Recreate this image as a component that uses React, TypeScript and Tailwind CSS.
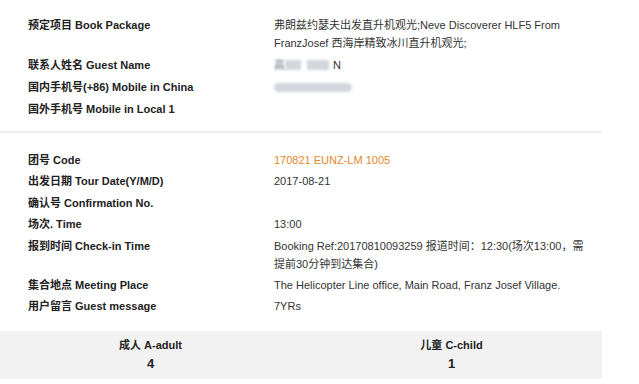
import React from 'react';

type Row = { label: string; value?: React.ReactNode };

const font = { fontFamily: '"Liberation Sans", "Noto Sans CJK SC", sans-serif' };

const Blur: React.FC<{ w: string }> = ({ w }) => (
  <span className={`inline-block h-[10px] ${w} bg-gray-300 blur-[1.5px] align-middle`} />
);

const guestName = (
  <span className="flex items-center">
    <span className="text-gray-500 blur-[1px]">高</span>
    <Blur w="w-[16px]" />
    <span className="w-[6px]" />
    <Blur w="w-[22px]" />
    <span className="w-[4px]" />
    <span>N</span>
  </span>
);

const mobile = (
  <span className="flex items-center h-[18px]">
    <span className="inline-block h-[9px] w-[78px] rounded-full bg-gray-300 blur-[1.5px]" />
  </span>
);

const contact: Row[] = [
  {
    label: '预定项目 Book Package',
    value: '弗朗兹约瑟夫出发直升机观光;Neve Discoverer HLF5 From FranzJosef 西海岸精致冰川直升机观光;',
  },
  { label: '联系人姓名 Guest Name', value: guestName },
  { label: '国内手机号(+86) Mobile in China', value: mobile },
  { label: '国外手机号 Mobile in Local 1' },
];

const tour: Row[] = [
  { label: '团号 Code', value: <span className="text-[#e2892c]">170821 EUNZ-LM 1005</span> },
  { label: '出发日期 Tour Date(Y/M/D)', value: '2017-08-21' },
  { label: '确认号 Confirmation No.' },
  { label: '场次. Time', value: '13:00' },
  {
    label: '报到时间 Check-in Time',
    value: 'Booking Ref:20170810093259 报道时间：12:30(场次13:00，需提前30分钟到达集合)',
  },
  { label: '集合地点 Meeting Place', value: 'The Helicopter Line office, Main Road, Franz Josef Village.' },
  { label: '用户留言 Guest message', value: '7YRs' },
];

const InfoRow: React.FC<Row> = ({ label, value }) => (
  <div className="flex text-[11px] leading-[18px]">
    <div className="w-[246px] shrink-0 font-bold text-[#222]">{label}</div>
    <div className="w-[318px] text-[#333]">{value}</div>
  </div>
);

export default function App() {
  return (
    <div className="w-[639px] h-[384px] bg-white overflow-hidden" style={font}>
      <div className="w-[602px]">
        <div className="flex flex-col gap-[4px] pl-[28px] pt-[16px] pb-[13px]">
          {contact.map(r => (
            <InfoRow key={r.label} {...r} />
          ))}
        </div>
        <div className="h-[2px] bg-[#eeeeee]" />
        <div className="flex flex-col gap-[3.4px] pl-[28px] pt-[18px] pb-[16px]">
          {tour.map(r => (
            <InfoRow key={r.label} {...r} />
          ))}
        </div>
        <div className="grid grid-cols-2 bg-[#f2f2f2] h-[48px] pt-[5px] text-center font-bold text-[#222]">
          <div>
            <div className="text-[11px] leading-[18px]">成人 A-adult</div>
            <div className="text-[13px] leading-[20px]">4</div>
          </div>
          <div>
            <div className="text-[11px] leading-[18px]">儿童 C-child</div>
            <div className="text-[13px] leading-[20px]">1</div>
          </div>
        </div>
      </div>
    </div>
  );
}
